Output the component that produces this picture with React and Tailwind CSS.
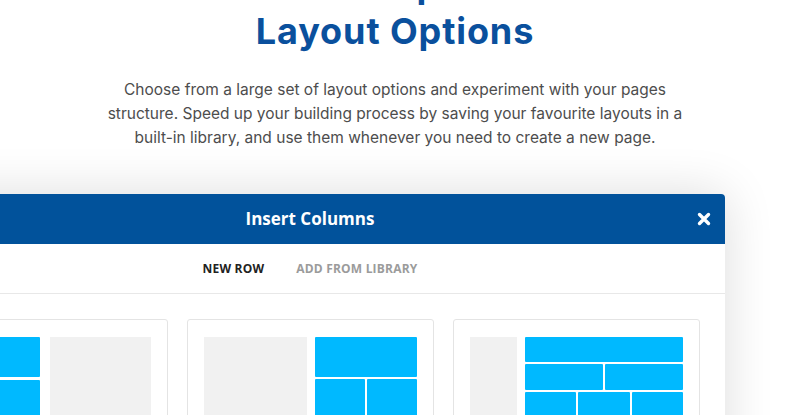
import React from "react";

const Blue = ({ className = "" }) => (
  <div className={`bg-[#00b9ff] rounded-[1px] ${className}`} />
);

function CardA() {
  return (
    <div className="w-[247px] shrink-0 rounded-[3px] border border-[#e4e4e4] bg-white pt-[17px] px-[16px] pb-[16px]">
      <div className="flex h-[124px] gap-[10px]">
        <div className="flex flex-1 flex-col gap-[3px]">
          <Blue className="h-[40px]" />
          <div className="flex flex-1 gap-[2px]">
            <Blue className="flex-1" />
            <Blue className="flex-1" />
          </div>
        </div>
        <div className="flex-1 bg-[#f1f1f1]" />
      </div>
    </div>
  );
}

function CardB() {
  return (
    <div className="w-[247px] shrink-0 rounded-[3px] border border-[#e4e4e4] bg-white pt-[17px] px-[16px] pb-[16px]">
      <div className="flex h-[124px] gap-[8px]">
        <div className="flex-1 bg-[#f1f1f1]" />
        <div className="flex flex-1 flex-col gap-[2px]">
          <Blue className="h-[40px]" />
          <div className="flex flex-1 gap-[2px]">
            <Blue className="flex-1" />
            <Blue className="flex-1" />
          </div>
        </div>
      </div>
    </div>
  );
}

function CardC() {
  return (
    <div className="w-[247px] shrink-0 rounded-[3px] border border-[#e4e4e4] bg-white pt-[17px] px-[16px] pb-[16px]">
      <div className="flex h-[124px] gap-[8px]">
        <div className="w-[47px] bg-[#f1f1f1]" />
        <div className="flex flex-1 flex-col gap-[2px]">
          <Blue className="h-[25px]" />
          <div className="flex h-[26px] gap-[2px]">
            <Blue className="flex-1" />
            <Blue className="flex-1" />
          </div>
          <div className="flex h-[26px] gap-[2px]">
            <Blue className="flex-1" />
            <Blue className="flex-1" />
            <Blue className="flex-1" />
          </div>
          <div className="flex h-[26px] gap-[2px]">
            <Blue className="flex-1" />
            <Blue className="flex-1" />
            <Blue className="flex-1" />
            <Blue className="flex-1" />
          </div>
        </div>
      </div>
    </div>
  );
}

export default function App() {
  return (
    <div className="w-[800px] h-[415px] overflow-hidden bg-white">
      <div className="flex flex-col items-center pr-[10px]">
        <h1
          className="mt-[-38px] whitespace-nowrap text-center text-[36px] leading-[46px] font-bold tracking-[0.9px] text-[#0a509d]"
          style={{ fontFamily: "Inter, sans-serif" }}
        >
          Unlimited Setups and More
          <br />
          Layout Options
        </h1>
        <p
          className="mt-[24px] whitespace-nowrap text-center text-[15.5px] leading-[24px] text-[#4d4d4d]"
          style={{ fontFamily: "Inter, sans-serif" }}
        >
          Choose from a large set of layout options and experiment with your pages
          <br />
          structure. Speed up your building process by saving your favourite layouts in a
          <br />
          built-in library, and use them whenever you need to create a new page.
        </p>
      </div>

      <div className="mt-[44px] ml-[-105px] w-[830px] rounded-t-[4px] bg-white shadow-[0_0_50px_rgba(0,0,0,0.14)]">
        <div className="relative flex h-[50px] items-center justify-center rounded-t-[4px] bg-[#01529b]">
          <span
            className="text-[17px] font-bold text-white"
            style={{ fontFamily: "'Open Sans', sans-serif" }}
          >
            Insert Columns
          </span>
          <button className="absolute right-[14px] top-[18px] flex h-[14px] w-[14px] items-center justify-center">
            <svg viewBox="0 0 14 14" width="14" height="14">
              <path
                d="M2.5 2.5 L11.5 11.5 M11.5 2.5 L2.5 11.5"
                stroke="white"
                strokeWidth="3.4"
                strokeLinecap="round"
              />
            </svg>
          </button>
        </div>
        <div
          className="flex h-[50px] items-center justify-center gap-[32px] border-b border-[#e8e8e8] text-[12px] font-bold tracking-[0.2px]"
          style={{ fontFamily: "'Open Sans', sans-serif" }}
        >
          <span className="text-[#222]">NEW ROW</span>
          <span className="text-[#9b9b9b]">ADD FROM LIBRARY</span>
        </div>
        <div className="flex gap-[19px] px-[26px] pt-[25px] pb-[26px]">
          <CardA />
          <CardB />
          <CardC />
        </div>
      </div>
    </div>
  );
}
